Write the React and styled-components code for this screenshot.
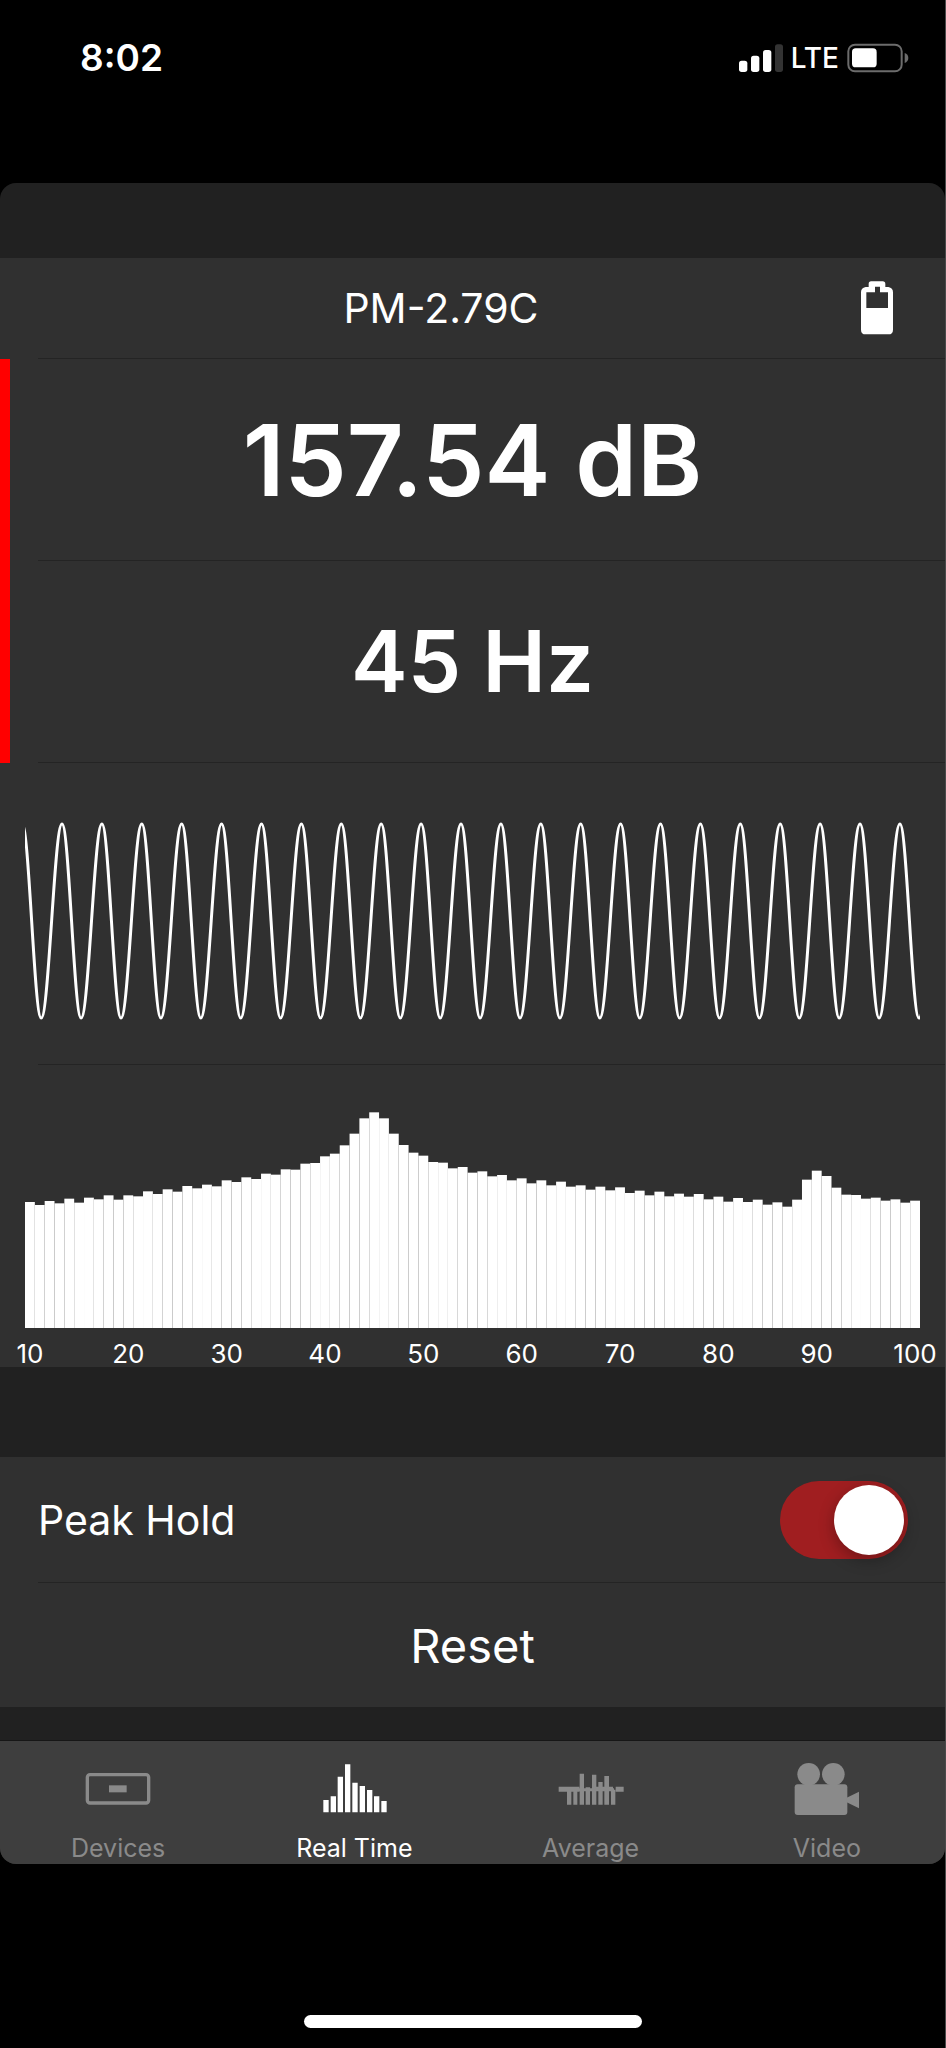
import React, { useState } from "react";
import styled, { createGlobalStyle } from "styled-components";

const GlobalStyle = createGlobalStyle`
  * {
    box-sizing: border-box;
  }
  body {
    margin: 0;
    background: #000;
    color: #fff;
    font-family: Inter, "Liberation Sans", sans-serif;
  }
`;

const Screen = styled("div")`
  display: flex;
  flex-direction: column;
  min-height: 100vh;
  background: #000;
  border-right: 1px solid #4a4a4a;
`;

const StatusBar = styled("header")`
  display: flex;
  align-items: center;
  justify-content: space-between;
  padding: 34px 36px 101px 80px;
  height: 183px;
`;

const Clock = styled("time")`
  font-size: 37px;
  font-weight: 600;
  line-height: 48px;
`;

const StatusIcons = styled("div")`
  display: flex;
  align-items: center;
  gap: 8px;
`;

const Carrier = styled("span")`
  font-size: 28px;
  font-weight: 500;
  line-height: 48px;
`;

const Sheet = styled("main")`
  display: flex;
  flex-direction: column;
  overflow: hidden;
  padding-top: 75px;
  border-radius: 16px;
  background: #212121;
`;

const Panel = styled("section")`
  background: #303030;
  margin-bottom: ${(props) => props.$gap}px;
`;

const Divider = styled("div")`
  height: 1px;
  margin-left: 38px;
  background: #242424;
`;

const DeviceRow = styled("div")`
  display: flex;
  align-items: center;
  gap: 16px;
  height: 100px;
  padding: 0 51px 0 38px;
`;

const DeviceName = styled("h1")`
  flex: 1;
  margin: 0;
  font-size: 41px;
  font-weight: 400;
  text-align: center;
`;

const Readouts = styled("div")`
  box-shadow: inset 10px 0 #f00;
`;

const Readout = styled("div")`
  display: flex;
  align-items: center;
  justify-content: center;
  height: 201px;
  font-size: ${(props) => props.$size}px;
  font-weight: 600;
`;

const WaveRow = styled("div")`
  padding: 58px 25px 43px;
`;

const SpectrumRow = styled("div")`
  padding: 47px 25px 0;
`;

const Chart = styled("svg")`
  display: block;
  width: 100%;
  height: ${(props) => props.$height}px;
`;

const Axis = styled("div")`
  display: flex;
  justify-content: space-between;
  padding-top: 12px;
`;

// one label is as wide as one bar, so its text centres on that bar
const Tick = styled("span")`
  display: flex;
  justify-content: center;
  width: calc(100% / 91);
  font-size: 26px;
  line-height: 27px;
`;

const SettingRow = styled("div")`
  display: flex;
  align-items: center;
  justify-content: space-between;
  height: 125px;
  padding: 0 37px 0 38px;
`;

const SettingLabel = styled("label")`
  font-size: 41px;
`;

const Switch = styled("input")`
  appearance: none;
  display: flex;
  align-items: center;
  justify-content: ${(props) => (props.checked ? "flex-end" : "flex-start")};
  width: 128px;
  height: 78px;
  margin: 0;
  padding: 4px;
  border-radius: 39px;
  background: ${(props) => (props.checked ? "#a01e20" : "#4a4a4a")};
  cursor: pointer;

  &::before {
    content: "";
    width: 70px;
    height: 70px;
    border-radius: 50%;
    background: #fff;
    box-shadow: 0 5px 16px rgba(0, 0, 0, 0.3);
  }
`;

const ResetButton = styled("button")`
  display: block;
  width: 100%;
  height: 124px;
  border: 0;
  background: none;
  color: inherit;
  font-family: inherit;
  font-size: 47px;
  cursor: pointer;
`;

const TabBar = styled("nav")`
  display: flex;
  border-top: 1px solid #161616;
  background: #3e3e3e;
`;

const Tab = styled("a")`
  flex: 1;
  display: flex;
  flex-direction: column;
  align-items: center;
  gap: 17px;
  padding-top: 22px;
  color: ${(props) => (props.$active ? "#fff" : "#8a8a8a")};
  font-size: 25px;
  line-height: 32px;
  text-decoration: none;
`;

const HomeArea = styled("footer")`
  display: flex;
  justify-content: center;
  margin-top: auto;
  padding: 20px 0;
`;

const HomeIndicator = styled("div")`
  width: 338px;
  height: 13px;
  border-radius: 7px;
  background: #fff;
`;

// bar heights for 10 Hz to 100 Hz, full scale is 648
const levels = [
  378, 369, 381, 374, 388, 376, 391, 386, 398, 385,
  398, 395, 410, 402, 416, 409, 426, 419, 430, 425,
  443, 438, 452, 447, 463, 460, 476, 475, 493, 495,
  515, 523, 548, 583, 629, 647, 629, 583, 549, 526,
  517, 498, 496, 479, 483, 466, 470, 455, 459, 443,
  449, 434, 443, 428, 439, 424, 428, 415, 424, 413,
  422, 405, 412, 398, 409, 395, 403, 394, 402, 386,
  394, 379, 390, 378, 385, 370, 377, 364, 385, 445,
  472, 456, 421, 400, 399, 388, 391, 382, 386, 376, 382
];

const ticks = [10, 20, 30, 40, 50, 60, 70, 80, 90, 100];

const wavePath = () => {
  const top = 3;
  const bottom = 197;
  const fall = 19.1;
  const rise = 20.8;
  let x = -2.9;
  let d = `M${x} ${top}`;
  for (let i = 0; i < 23; i++) {
    const low = x + fall;
    const next = low + rise;
    d += `C${x + fall * 0.37} ${top} ${low - fall * 0.37} ${bottom} ${low} ${bottom}`;
    d += `C${low + rise * 0.37} ${bottom} ${next - rise * 0.37} ${top} ${next} ${top}`;
    x = next;
  }
  return d;
};

const SignalIcon = () => (
  <svg width="44" height="28" viewBox="0 0 132 84" fill="#fff" aria-hidden="true">
    <rect x="0" y="50" width="25" height="34" rx="8" />
    <rect x="36" y="35" width="25" height="49" rx="8" />
    <rect x="72" y="18" width="25" height="66" rx="8" />
    <rect x="108" y="1" width="24" height="83" rx="8" fill="#333" />
  </svg>
);

const PhoneBatteryIcon = () => (
  <svg width="62" height="30" viewBox="0 0 186 90" aria-hidden="true">
    <rect x="4" y="5" width="160" height="80" rx="20" fill="none" stroke="#6c6c6c" strokeWidth="6" />
    <rect x="15" y="16" width="74" height="57" rx="11" fill="#fff" />
    <path d="M173 30c7 2 11 8 11 15s-4 13-11 15z" fill="#6c6c6c" />
  </svg>
);

const DeviceBatteryIcon = () => (
  <svg width="34" height="54" viewBox="0 0 102 162" aria-label="Battery level">
    <path
      fill="#fff"
      fillRule="evenodd"
      d="M35 1h33q8 0 8 8v9h9q14 3 14 16v112q0 14-14 14H17q-14 0-14-14V34q0-13 14-16h9V9q0-9 9-8zM45 17v17H19v47h65V34H60V17z"
    />
  </svg>
);

const DevicesIcon = () => (
  <svg width="66" height="52" viewBox="0 0 198 156" aria-hidden="true">
    <rect x="7" y="35" width="184" height="85" rx="8" fill="none" stroke="currentColor" strokeWidth="10" />
    <rect x="72" y="67" width="53" height="21" fill="currentColor" />
  </svg>
);

const RealTimeIcon = () => (
  <svg width="66" height="52" viewBox="0 0 198 156" aria-hidden="true">
    <path
      fill="currentColor"
      d="M7 111h16v37H7zM29 100h16v48H29zM50 41h16v107H50zM72 4h16v144H72zM94 59h16v89H94zM116 69h16v79h-16zM138 81h16v67h-16zM159 100h16v48h-16zM181 114h16v34h-16z"
    />
  </svg>
);

const AverageIcon = () => (
  <svg width="66" height="52" viewBox="0 0 198 156" aria-hidden="true">
    <path
      fill="currentColor"
      d="M2 71h62v15H2zM64 76h104v9H64zM173 71h24v15h-24zM27 73h13v52H27zM46 80h12v45H46zM65 32h13v93H65zM83 73h13v52H83zM102 35h13v90h-13zM121 57h13v68h-13zM139 39h14v86h-14zM159 80h13v45h-13zM115 71h50v10h-50z"
    />
  </svg>
);

const VideoIcon = () => (
  <svg width="66" height="52" viewBox="0 0 198 156" fill="currentColor" aria-hidden="true">
    <circle cx="44" cy="34" r="34" />
    <circle cx="118" cy="34" r="34" />
    <rect x="2" y="64" width="158" height="92" rx="9" />
    <path d="M158 104l37-18v50l-37-18z" />
  </svg>
);

const tabs = [
  { name: "Devices", href: "#devices", icon: DevicesIcon },
  { name: "Real Time", href: "#realtime", icon: RealTimeIcon, active: true },
  { name: "Average", href: "#average", icon: AverageIcon },
  { name: "Video", href: "#video", icon: VideoIcon }
];

const Spectrum = () => (
  <SpectrumRow>
    <Chart $height={216} viewBox="0 0 91 648" preserveAspectRatio="none" role="img" aria-label="Spectrum">
      {levels.map((level, i) => (
        <rect key={i} x={i} y={648 - level} width="1" height={level} fill="#fff" />
      ))}
    </Chart>
    <Axis>
      {ticks.map(tick => (
        <Tick key={tick}>{tick}</Tick>
      ))}
    </Axis>
  </SpectrumRow>
);

const App = () => {
  const [peakHold, setPeakHold] = useState(true);

  return (
    <Screen>
      <GlobalStyle />
      <StatusBar>
        <Clock>8:02</Clock>
        <StatusIcons>
          <SignalIcon />
          <Carrier>LTE</Carrier>
          <PhoneBatteryIcon />
        </StatusIcons>
      </StatusBar>
      <Sheet>
        <Panel $gap={90}>
          <DeviceRow>
            <DeviceName>PM-2.79C</DeviceName>
            <DeviceBatteryIcon />
          </DeviceRow>
          <Divider />
          <Readouts>
            <Readout $size={99}>157.54 dB</Readout>
            <Divider />
            <Readout $size={85}>45 Hz</Readout>
            <Divider />
          </Readouts>
          <WaveRow>
            <Chart $height={200} viewBox="0 0 895 200" preserveAspectRatio="none" role="img" aria-label="Waveform">
              <path d={wavePath()} fill="none" stroke="#fff" strokeWidth="3" vectorEffect="non-scaling-stroke" />
            </Chart>
          </WaveRow>
          <Divider />
          <Spectrum />
        </Panel>
        <Panel $gap={33}>
          <SettingRow>
            <SettingLabel htmlFor="peak-hold">Peak Hold</SettingLabel>
            <Switch
              id="peak-hold"
              type="checkbox"
              role="switch"
              checked={peakHold}
              onChange={() => setPeakHold(!peakHold)}
            />
          </SettingRow>
          <Divider />
          <ResetButton type="button">Reset</ResetButton>
        </Panel>
        <TabBar>
          {tabs.map(({ name, href, icon: Icon, active }) => (
            <Tab key={name} href={href} $active={active}>
              <Icon />
              <span>{name}</span>
            </Tab>
          ))}
        </TabBar>
      </Sheet>
      <HomeArea>
        <HomeIndicator />
      </HomeArea>
    </Screen>
  );
};

export default App;
